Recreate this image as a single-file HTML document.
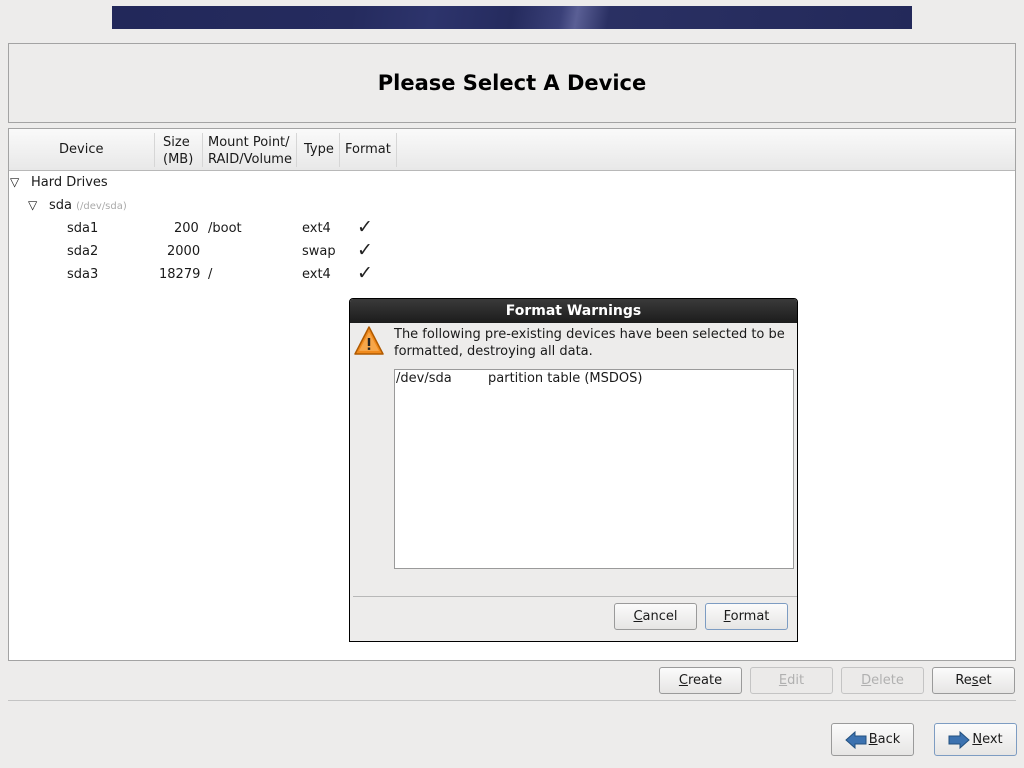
<!DOCTYPE html>
<html><head><meta charset="utf-8"><style>
*{margin:0;padding:0;box-sizing:border-box}
body{width:1024px;height:768px;background:#edeceb;position:relative;overflow:hidden;font-family:"DejaVu Sans","Liberation Sans",sans-serif;font-size:13px;color:#1a1a1a}
.a{position:absolute}
.btn{position:absolute;height:27px;border:1px solid #9a9a9a;border-radius:3px;background:linear-gradient(#fbfbfb,#e6e5e4);text-align:center;line-height:25px;font-size:13px;color:#1a1a1a}
.dis{color:#b0b0b0;border-color:#c4c4c4;background:#ebeae9}
.foc{border-color:#7d9cc2}
u{text-decoration:underline}
.sep{position:absolute;top:133px;width:1px;height:34px;background:#d6d6d6}
.chk{position:absolute;left:357px;font-size:19px;color:#222;font-family:"DejaVu Serif",serif}
.tri{position:absolute;font-size:12px}
</style></head><body>
<div class="a" style="left:112px;top:6px;width:800px;height:23px;background:linear-gradient(100deg,#22285a 0%,#252b5e 30%,#2d346c 40%,#252b5e 50%,#3a4078 56%,#5a5f95 58%,#2a3063 62%,#23295a 100%)"></div>
<div class="a" style="left:8px;top:43px;width:1008px;height:80px;border:1px solid #a3a3a3;background:#edeceb"></div>
<div class="a" style="left:0;top:71px;width:1024px;text-align:center;font-weight:bold;font-size:21px;color:#000">Please Select A Device</div>
<div class="a" style="left:8px;top:128px;width:1008px;height:533px;border:1px solid #a3a3a3;background:#fff"></div>
<div class="a" style="left:9px;top:129px;width:1006px;height:42px;background:linear-gradient(#fafafa,#e8e8e8);border-bottom:1px solid #b8b8b8"></div>
<div class="sep" style="left:154px"></div><div class="sep" style="left:202px"></div><div class="sep" style="left:296px"></div><div class="sep" style="left:339px"></div><div class="sep" style="left:396px"></div>
<div class="a" style="left:59px;top:142px">Device</div>
<div class="a" style="left:163px;top:134px;line-height:17px">Size<br>(MB)</div>
<div class="a" style="left:208px;top:134px;line-height:17px">Mount Point/<br>RAID/Volume</div>
<div class="a" style="left:304px;top:142px">Type</div>
<div class="a" style="left:345px;top:142px">Format</div>
<div class="tri" style="left:10px;top:175px">▽</div>
<div class="a" style="left:31px;top:175px">Hard Drives</div>
<div class="tri" style="left:28px;top:198px">▽</div>
<div class="a" style="left:49px;top:198px">sda <span style="font-size:10px;color:#aaa">(/dev/sda)</span></div>
<div class="a" style="left:67px;top:221px">sda1</div><div class="a" style="left:174px;top:221px">200</div><div class="a" style="left:208px;top:221px">/boot</div><div class="a" style="left:302px;top:221px">ext4</div><div class="chk" style="top:216px">✓</div>
<div class="a" style="left:67px;top:244px">sda2</div><div class="a" style="left:167px;top:244px">2000</div><div class="a" style="left:302px;top:244px">swap</div><div class="chk" style="top:239px">✓</div>
<div class="a" style="left:67px;top:267px">sda3</div><div class="a" style="left:159px;top:267px">18279</div><div class="a" style="left:208px;top:267px">/</div><div class="a" style="left:302px;top:267px">ext4</div><div class="chk" style="top:262px">✓</div>
<div class="a" style="left:349px;top:298px;width:449px;height:344px;border:1px solid #000;background:#edeceb;border-radius:4px 4px 0 0"></div>
<div class="a" style="left:350px;top:299px;width:447px;height:24px;background:linear-gradient(#3a3a3a,#1c1c1c);border-radius:3px 3px 0 0;color:#fff;font-weight:bold;text-align:center;line-height:24px;font-size:14px">Format Warnings</div>
<svg class="a" style="left:353px;top:325px" width="32" height="32" viewBox="0 0 32 32"><path d="M16 2 L30 29 L2 29 Z" fill="#f08a1c" stroke="#b05a00" stroke-width="1.5" stroke-linejoin="round"/><path d="M16 7 L26 26 L6 26 Z" fill="#f6a64a"/><rect x="14.8" y="13" width="2.4" height="8" fill="#222"/><rect x="14.8" y="22.5" width="2.4" height="2.4" fill="#222"/></svg>
<div class="a" style="left:394px;top:326px;font-size:13px;line-height:17px;color:#1a1a1a">The following pre-existing devices have been selected to be<br>formatted, destroying all data.</div>
<div class="a" style="left:394px;top:369px;width:400px;height:200px;border:1px solid #9a9a9a;background:#fff"></div>
<div class="a" style="left:396px;top:371px;font-size:13px">/dev/sda</div>
<div class="a" style="left:488px;top:371px;font-size:13px">partition table (MSDOS)</div>
<div class="a" style="left:353px;top:596px;width:444px;height:1px;background:#b8b8b8"></div>
<div class="btn" style="left:614px;top:603px;width:83px"><u>C</u>ancel</div>
<div class="btn foc" style="left:705px;top:603px;width:83px"><u>F</u>ormat</div>
<div class="btn" style="left:659px;top:667px;width:83px"><u>C</u>reate</div>
<div class="btn dis" style="left:750px;top:667px;width:83px"><u>E</u>dit</div>
<div class="btn dis" style="left:841px;top:667px;width:83px"><u>D</u>elete</div>
<div class="btn" style="left:932px;top:667px;width:83px">Re<u>s</u>et</div>
<div class="a" style="left:8px;top:700px;width:1008px;height:1px;background:#c4c4c4"></div>
<div class="btn" style="left:831px;top:723px;width:83px;height:33px;line-height:31px"><svg style="vertical-align:middle;margin-right:2px" width="22" height="18" viewBox="0 0 22 18"><path d="M1 9 L10 1 L10 5 L21 5 L21 13 L10 13 L10 17 Z" fill="#3c72b0" stroke="#22507f"/></svg><u>B</u>ack</div>
<div class="btn foc" style="left:934px;top:723px;width:83px;height:33px;line-height:31px"><svg style="vertical-align:middle;margin-right:2px" width="22" height="18" viewBox="0 0 22 18"><path d="M21 9 L12 1 L12 5 L1 5 L1 13 L12 13 L12 17 Z" fill="#3c72b0" stroke="#22507f"/></svg><u>N</u>ext</div>
</body></html>
